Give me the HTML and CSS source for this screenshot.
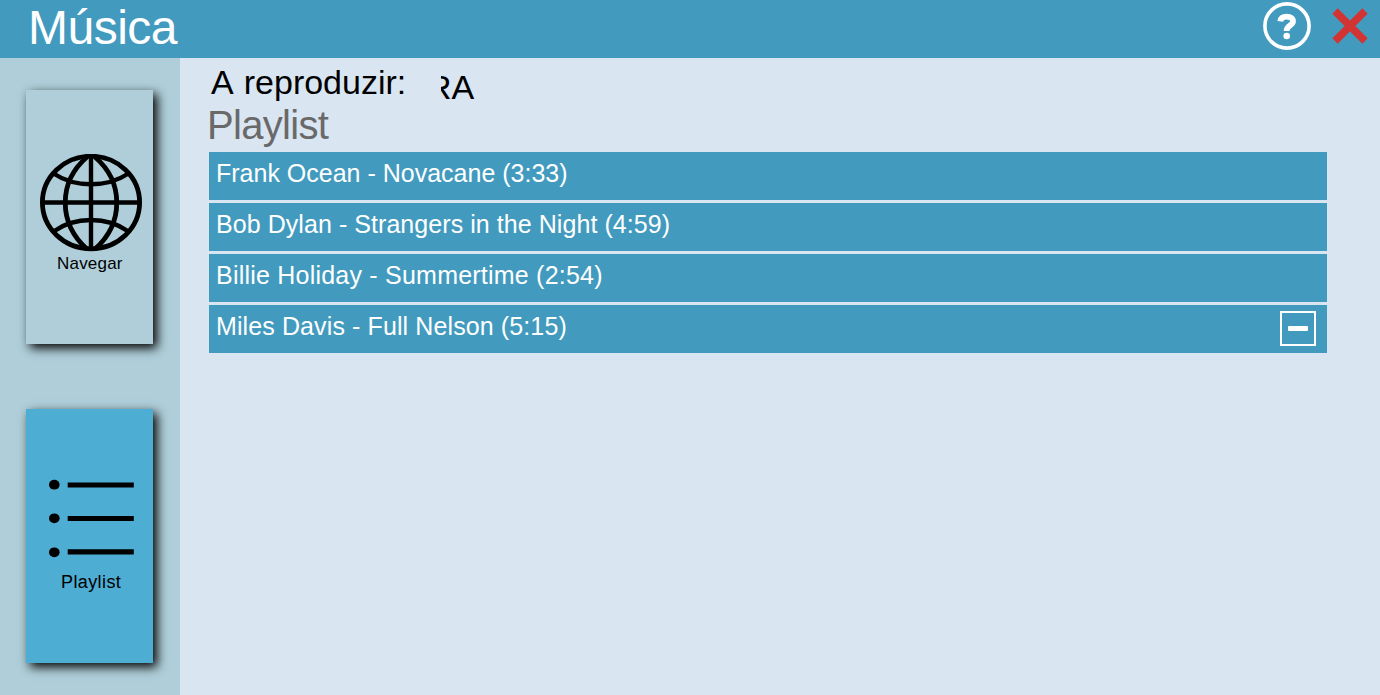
FILE: index.html
```html
<!DOCTYPE html>
<html lang="pt">
<head>
<meta charset="utf-8">
<title>Música</title>
<link rel="stylesheet" href="styles.css">
</head>
<body>
<header class="topbar">
  <h1 class="title">Música</h1>
  <div class="actions">
    <svg class="help" width="50" height="50" viewBox="0 0 50 50">
      <circle cx="25" cy="25" r="22.1" fill="none" stroke="#fff" stroke-width="3.6"/>
      <path d="M18.300 20.300C18.800 16.600 21.400 15.700 24.700 15.700C28.500 15.700 31 17.300 31 20.300C31 24.800 24.600 24.200 24.600 30" fill="none" stroke="#fff" stroke-width="5.800"/>
      <circle cx="24.700" cy="35" r="3.300" fill="#fff"/>
    </svg>
    <svg class="close" width="36" height="36" viewBox="0 0 36 36">
      <path d="M3 3L33 33M33 3L3 33" stroke="#d13433" stroke-width="7.500"/>
    </svg>
  </div>
</header>
<div class="layout">
  <nav class="sidebar">
    <button class="tile">
      <svg class="globe" width="102" height="98" viewBox="0 0 102 98" fill="none" stroke="#000" stroke-width="4.800">
        <ellipse cx="51" cy="48.500" rx="48.600" ry="46.300"/>
        <path d="M51 3V95M3 48.500H99" stroke-width="4.400"/>
        <path d="M47 3C18 28 18 69 47 95M55 3C84 28 84 69 55 95"/>
        <path d="M13.500 19.500C35 33.800 67 33.800 88.500 19.500M13.500 77.500C35 62.200 67 62.200 88.500 77.500" stroke-width="4.400"/>
      </svg>
      <span class="label label-nav">Navegar</span>
    </button>
    <button class="tile active">
      <svg class="list" width="86" height="80" viewBox="0 0 86 80">
        <g><ellipse cx="5.300" cy="5.700" rx="5.300" ry="4.900"/><ellipse cx="5.300" cy="39.300" rx="5.300" ry="4.900"/><ellipse cx="5.300" cy="73.300" rx="5.300" ry="4.900"/></g>
        <path d="M18.700 6H84.800M18.700 39.500H84.800M18.700 72.900H84.800" stroke="#000" stroke-width="5.200"/>
      </svg>
      <span class="label label-list">Playlist</span>
    </button>
  </nav>
  <main class="content">
    <div class="playing">
      <span class="playing-label">A reproduzir:</span>
      <div class="ticker"><span class="ticker-text">RA</span></div>
    </div>
    <h2 class="heading">Playlist</h2>
    <ul class="songs">
      <li class="song song-tight">Frank Ocean - Novacane (3:33)</li>
      <li class="song">Bob Dylan - Strangers in the Night (4:59)</li>
      <li class="song song-wide">Billie Holiday - Summertime (2:54)</li>
      <li class="song song-last">Miles Davis - Full Nelson (5:15)
        <button class="remove" aria-label="Remover"><span class="dash"></span></button>
      </li>
    </ul>
  </main>
</div>
</body>
</html>
```

FILE: styles.css
```css
* { box-sizing: border-box; }
body {
  margin: 0;
  height: 695px;
  overflow: hidden;
  display: flex;
  flex-direction: column;
  background: #d9e5f1;
  font-family: "Liberation Sans", Arial, sans-serif;
}
.topbar {
  height: 58px;
  flex: none;
  display: flex;
  justify-content: space-between;
  background: #429bbe;
}
.title {
  margin: 0;
  padding-left: 28px;
  font-size: 48px;
  font-weight: 400;
  letter-spacing: -.5px;
  line-height: 56px;
  color: #fff;
}
.actions {
  display: flex;
  gap: 20px;
  padding: 1px 12px 0 0;
}
.close { margin-top: 7px; }
.layout { flex: 1; display: flex; }
.sidebar {
  width: 180px;
  flex: none;
  display: flex;
  flex-direction: column;
  gap: 65px;
  padding: 32px 0 0 26px;
  background: #afced9;
}
.tile {
  width: 127px;
  height: 254px;
  padding: 64px 0 0;
  border: 0;
  display: flex;
  flex-direction: column;
  align-items: flex-start;
  background: #afced9;
  box-shadow: 4px 4px 10px #000;
  font-family: inherit;
  color: #000;
}
.tile.active { background: #4dadd3; padding-top: 70px; }
.globe { margin-left: 14px; flex: none; }
.list { margin-left: 23px; flex: none; }
.label { line-height: 20px; white-space: nowrap; }
.label-nav { margin: 2px 0 0 31px; font-size: 17px; letter-spacing: .2px; }
.label-list { margin: 13px 0 0 35px; font-size: 18px; letter-spacing: .4px; }
.content { flex: 1; padding: 0 53px 0 29px; }
.playing { display: flex; height: 47px; }
.playing-label {
  width: 230px;
  margin-left: 2px;
  font-size: 34px;
  line-height: 48px;
  word-spacing: 2.5px;
}
.ticker { width: 500px; overflow: hidden; }
.ticker-text { display: block; margin-left: -14px; font-size: 34px; line-height: 58px; }
.heading {
  height: 47px;
  margin: 0 0 0 -5px;
  padding-left: 3px;
  font-size: 40px;
  font-weight: 400;
  letter-spacing: -.7px;
  line-height: 41px;
  color: #696969;
}
.songs {
  margin: 0;
  padding: 0;
  display: flex;
  flex-direction: column;
  gap: 3px;
  list-style: none;
}
.song {
  height: 48px;
  display: flex;
  justify-content: space-between;
  padding: 0 11px 0 7px;
  background: #429bbe;
  color: #fff;
  font-size: 25px;
  letter-spacing: .06px;
  line-height: 43px;
}
.song-tight { letter-spacing: 0; }
.song-wide { letter-spacing: .22px; }
.song-last { letter-spacing: .11px; }
.remove {
  width: 36px;
  height: 35px;
  margin-top: 6px;
  padding: 0;
  border: 2px solid #fff;
  display: flex;
  align-items: center;
  justify-content: center;
  background: transparent;
}
.dash { width: 20px; height: 5px; border-radius: 1px; background: #fff; }
```
